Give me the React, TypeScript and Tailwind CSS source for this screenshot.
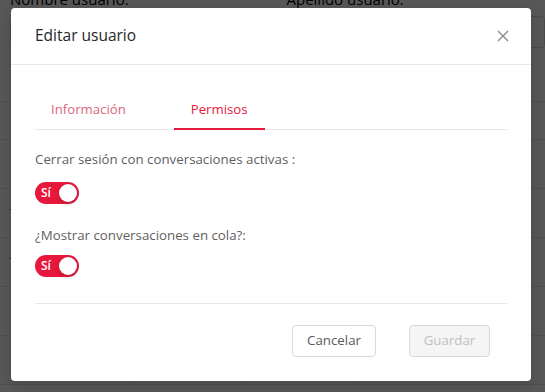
import React from 'react';

const font = { fontFamily: '"Open Sans", "Noto Sans", sans-serif' };

const rows = ['Nombre', 'lucia', 'Test', 'Test', 'Rosa', 'Maria'];

const Switch = () => (
  <button className="relative flex h-[22px] w-[44px] items-center rounded-full bg-[#e8173c] pl-[6px]">
    <span className="text-[12px] font-semibold leading-none text-white">Sí</span>
    <span className="absolute right-[2px] top-[2px] h-[18px] w-[18px] rounded-full bg-white shadow-[0_2px_4px_rgba(0,35,11,0.2)]" />
  </button>
);

const App = () => {
  return (
    <div className="relative h-[392px] w-[545px] overflow-hidden bg-white text-black" style={font}>
      {/* page behind the dialog */}
      <div className="flex flex-col">
        <div className="-mt-[12px] grid grid-cols-2 gap-x-[20px] px-[10px]">
          <div className="flex flex-col gap-[6px]">
            <span className="text-[15px] leading-[22px]">Nombre usuario:</span>
            <div className="h-[32px] rounded border border-[#d9d9d9]" />
          </div>
          <div className="-mr-[10px] flex flex-col gap-[6px] pl-[4px]">
            <span className="text-[15px] leading-[22px]">Apellido usuario:</span>
            <div className="h-[32px] rounded border border-[#d9d9d9]" />
          </div>
        </div>
        <div className="mt-[53px] flex flex-col border-t border-[#e8e8e8]">
          {rows.map((r, i) => (
            <div
              key={i}
              className="grid h-[49px] grid-cols-[132px_114px_106px_1fr] items-center border-b border-[#e8e8e8] first:h-[38px]"
            >
              <span className={`pl-[10px] text-[15px] ${i === 0 ? 'font-semibold' : ''}`}>{r}</span>
              <span className="h-full border-l border-[#e8e8e8]" />
              <span className="h-full border-l border-[#e8e8e8]" />
              <span className="h-full border-l border-[#e8e8e8]" />
            </div>
          ))}
        </div>
      </div>

      {/* mask */}
      <div className="absolute inset-0 bg-black/[0.66]" />

      {/* dialog */}
      <div className="absolute left-[11px] top-[8px] flex w-[520px] flex-col rounded-[4px] bg-white shadow-[0_4px_12px_rgba(0,0,0,0.15)]">
        <div className="flex h-[57px] items-center justify-between border-b border-[#e8e8e8] px-[24px]">
          <span className="text-[15.5px] text-[#262626]">Editar usuario</span>
          <svg width="12" height="12" viewBox="0 0 12 12" className="mr-[-2px]">
            <path d="M1 1L11 11M11 1L1 11" stroke="#8c8c8c" strokeWidth="1.4" />
          </svg>
        </div>

        <div className="flex flex-col px-[24px] pt-[24px]">
          <div className="flex border-b border-[#e8e8e8] text-[13.2px]">
            <div className="px-[16px] py-[10px] leading-[20px] text-[#d9687b]">Información</div>
            <div className="relative ml-[32px] px-[17px] py-[10px] leading-[20px] text-[#e8173c]">
              Permisos
              <span className="absolute -bottom-px left-0 right-0 h-[2px] bg-[#e8173c]" />
            </div>
          </div>

          <div className="mt-[18px] text-[13.3px] leading-[22px] text-[#5f5f5f]">
            Cerrar sesión con conversaciones activas :
          </div>
          <div className="mt-[12px]">
            <Switch />
          </div>
          <div className="mt-[20px] text-[13.3px] leading-[22px] text-[#5f5f5f]">
            ¿Mostrar conversaciones en cola?:
          </div>
          <div className="mt-[9px]">
            <Switch />
          </div>

          <div className="mt-[26px] border-t border-[#e8e8e8]" />

          <div className="flex justify-end gap-[33px] pb-[24px] pr-[17px] pt-[21px] text-[13.3px]">
            <button className="h-[32px] w-[84px] rounded-[4px] border border-[#d9d9d9] bg-white text-[#595959]">
              Cancelar
            </button>
            <button className="h-[32px] w-[81px] rounded-[4px] border border-[#d9d9d9] bg-[#f5f5f5] text-[#bfbfbf]">
              Guardar
            </button>
          </div>
        </div>
      </div>
    </div>
  );
};

export default App;
